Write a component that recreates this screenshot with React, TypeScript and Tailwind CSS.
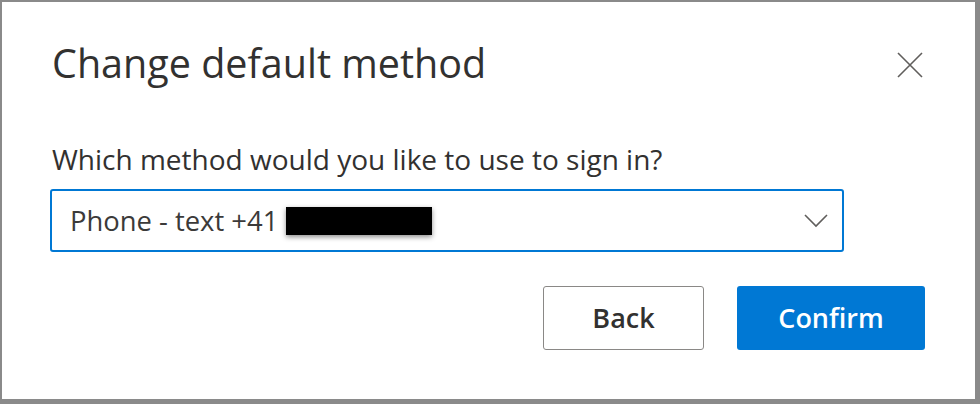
import React from 'react'

function CloseIcon() {
  return (
    <svg width="26" height="26" viewBox="0 0 26 26" fill="none">
      <path d="M1 1L25 25M25 1L1 25" stroke="#605e5c" strokeWidth="1.6" />
    </svg>
  )
}

function Chevron() {
  return (
    <svg width="24" height="14" viewBox="0 0 24 14" fill="none">
      <path d="M1 1L12 12L23 1" stroke="#605e5c" strokeWidth="1.6" />
    </svg>
  )
}

export default function App() {
  return (
    <div className="w-[980px] h-[404px] bg-[#8a8a8a] pl-[2px] pt-[2px] pr-[5px] pb-[5px] font-['Open_Sans',sans-serif]">
      <div className="h-full bg-white pl-[48px] pr-[50px] text-[#323130]">
        {/* header */}
        <div className="flex items-start justify-between pt-[35px]">
          <h1 className="ml-[2px] text-[39.5px] leading-[52px] font-normal">Change default method</h1>
          <button className="mt-[15px] mr-[2px]">
            <CloseIcon />
          </button>
        </div>

        <p className="mt-[52px] ml-[2px] text-[28px] leading-[36px]">
          Which method would you like to use to sign in?
        </p>

        {/* select */}
        <div className="mt-[12px] w-[794px] h-[63px] border-2 border-[#0078d4] rounded-[3px] flex items-center justify-between pl-[18px] pr-[14px]">
          <div className="flex items-center gap-[8px] text-[27.4px] leading-[36px] text-[#3b3a39]">
            <span>Phone - text +41</span>
            <span className="w-[146px] h-[28px] bg-black shadow-[0_2px_5px_rgba(0,0,0,0.45)]" />
          </div>
          <Chevron />
        </div>

        {/* actions */}
        <div className="mt-[34px] flex justify-end gap-[33px]">
          <button className="w-[161px] h-[64px] border border-[#8a8886] rounded-[3px] bg-white text-[27px] font-semibold text-[#323130]">
            Back
          </button>
          <button className="w-[188px] h-[64px] rounded-[3px] bg-[#0078d4] text-[27px] font-semibold text-white">
            Confirm
          </button>
        </div>
      </div>
    </div>
  )
}
